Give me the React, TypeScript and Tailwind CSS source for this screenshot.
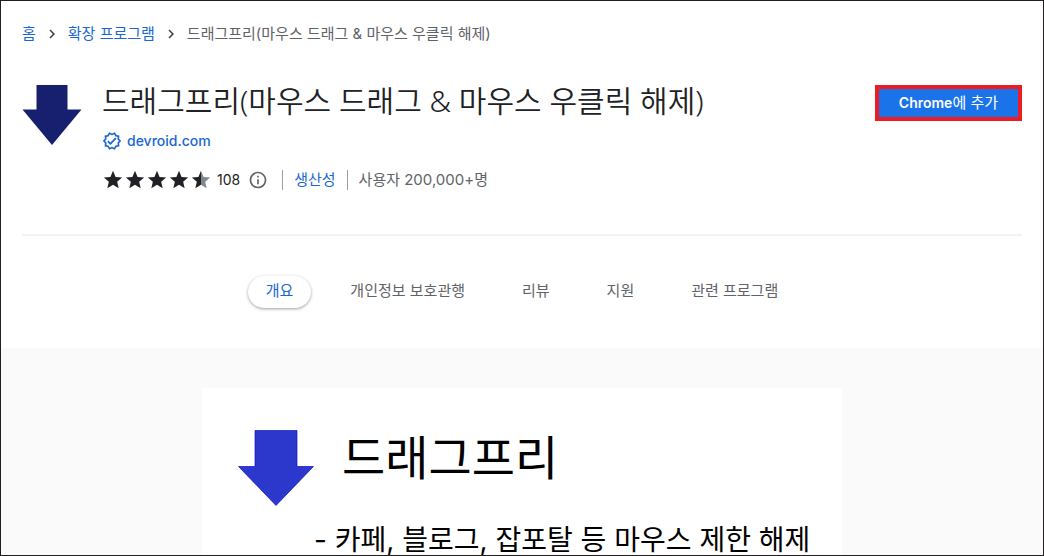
import { useState } from 'react';
import { MdChevronRight, MdInfoOutline, MdOutlineVerified, MdStar } from 'react-icons/md';

const tabs = ['개요', '개인정보 보호관행', '리뷰', '지원', '관련 프로그램'];

const extension = {
  name: '드래그프리(마우스 드래그 & 마우스 우클릭 해제)',
  developer: 'devroid.com',
  ratingCount: 108,
  category: '생산성',
  users: '사용자 200,000+명',
};

function Breadcrumb() {
  return (
    <nav className="flex items-center gap-[7px] text-[15px] leading-6 text-[#5f6368]">
      <a href="#home" className="text-[#1967d2]">홈</a>
      <MdChevronRight className="h-[18px] w-[18px] text-[#3c4043]" />
      <a href="#extensions" className="text-[#1967d2]">확장 프로그램</a>
      <MdChevronRight className="h-[18px] w-[18px] text-[#3c4043]" />
      <span>{extension.name}</span>
    </nav>
  );
}

function Rating() {
  return (
    <div className="flex" role="img" aria-label="4.5">
      {[1, 2, 3, 4].map((n) => (
        <MdStar key={n} className="h-[22px] w-[22px] text-[#202124]" />
      ))}
      {/* última estrella a la mitad */}
      <svg viewBox="0 0 24 24" className="h-[22px] w-[22px]">
        <path fill="#80868b" d="M12 17.27 18.18 21l-1.64-7.03L22 9.24l-7.19-.61L12 2z" />
        <path fill="#202124" d="M12 17.27 5.82 21l1.64-7.03L2 9.24l7.19-.61L12 2z" />
      </svg>
    </div>
  );
}

function ExtensionHeader() {
  return (
    <div className="flex items-start gap-5">
      <svg viewBox="0 0 60 60" className="h-[60px] w-[60px] shrink-0">
        <path fill="#16206f" d="M14.5 0h31v24.5H59.5L30 60 .5 24.5h14z" />
      </svg>
      <div className="min-w-0 flex-1">
        <h1 className="font-['Noto_Sans','Noto_Sans_CJK_KR',sans-serif] text-3xl leading-8 font-[350] text-[#202124]">
          {extension.name}
        </h1>
        <a
          href="#developer"
          className="mt-3 flex h-6 items-center gap-[5px] text-sm font-medium text-[#1967d2]"
        >
          <MdOutlineVerified className="h-5 w-5" />
          {extension.developer}
        </a>
        <div className="mt-[15px] flex h-6 items-center text-[15px] text-[#5f6368]">
          <Rating />
          <span className="ml-[5px] text-sm text-[#202124]">{extension.ratingCount}</span>
          <button type="button" aria-label="info" className="ml-2">
            <MdInfoOutline className="h-5 w-5" />
          </button>
          <a href="#category" className="ml-[14px] border-l border-[#9aa0a6] px-[11px] leading-5 text-[#1967d2]">
            {extension.category}
          </a>
          <span className="border-l border-[#9aa0a6] pl-[11px] leading-5">{extension.users}</span>
        </div>
      </div>
      <button
        type="button"
        className="h-9 border-4 border-[#ed1c24] bg-[#1a73e8] px-5 text-[15px] leading-6 text-white"
      >
        <span className="text-sm font-semibold">Chrome</span>에 추가
      </button>
    </div>
  );
}

export default function App() {
  const [activeTab, setActiveTab] = useState(tabs[0]);

  return (
    <div className="flex h-screen flex-col overflow-hidden border border-[#231f20] bg-white font-['Inter','Noto_Sans_CJK_KR',sans-serif]">
      <header className="shrink-0 px-[21px] pt-[21px]">
        <Breadcrumb />
        <div className="mt-[39px] border-b-2 border-[#f1f1f1] pb-[42px]">
          <ExtensionHeader />
        </div>
        <div className="flex justify-center gap-[21px] py-10">
          {tabs.map((tab) => (
            <button
              key={tab}
              type="button"
              onClick={() => setActiveTab(tab)}
              className={`h-8 rounded-full px-[18px] pb-0.5 text-[15px] leading-6 ${
                activeTab === tab
                  ? 'text-[#1967d2] shadow-[0_1px_3px_rgba(60,64,67,0.5)]'
                  : 'text-[#5f6368]'
              }`}
            >
              {tab}
            </button>
          ))}
        </div>
      </header>

      <main className="flex min-h-0 flex-1 justify-center bg-[#fafafa] pt-10">
        <section className="w-[640px] bg-white pt-[42px] text-black">
          <div className="flex items-start gap-7 pl-9">
            <svg viewBox="0 0 76 76" className="h-[76px] w-[76px]">
              <path fill="#2b38cb" stroke="#0b12c4" strokeWidth="0.7" d="M17 .5h42v36h16.5L38 75.5.5 36.5H17z" />
            </svg>
            <h2 className="text-[47px] leading-14">드래그프리</h2>
          </div>
          <p className="mt-[18px] pl-28 text-[28px] leading-8">- 카페, 블로그, 잡포탈 등 마우스 제한 해제</p>
        </section>
      </main>
    </div>
  );
}
